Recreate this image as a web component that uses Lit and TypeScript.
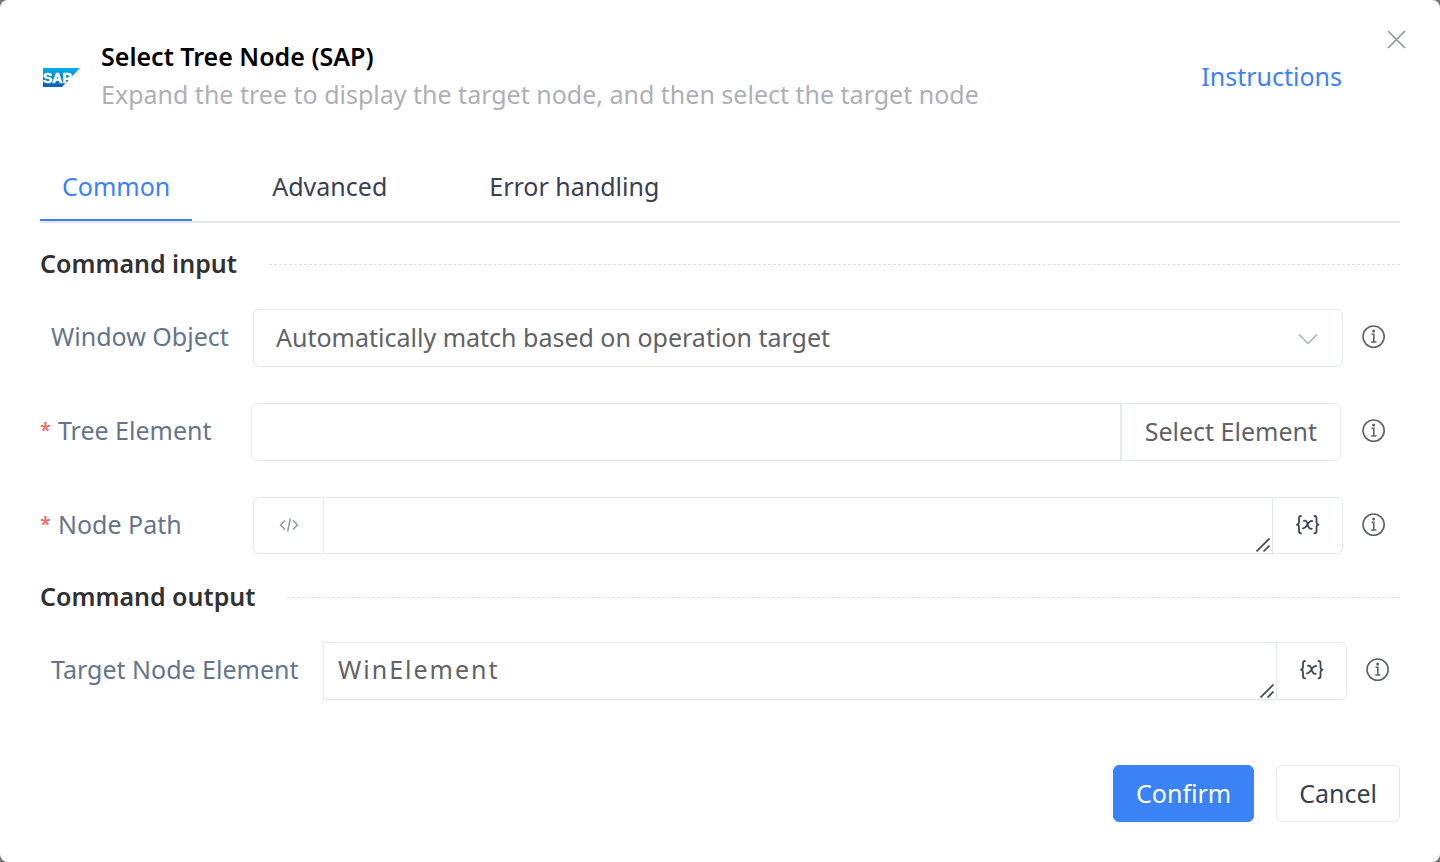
import { LitElement, html, css } from "lit";
import { customElement, property, state } from "lit/decorators.js";
import { classMap } from "lit/directives/class-map.js";

const variableIcon = html`
  <svg class="variable-icon" viewBox="0 0 24 22" aria-hidden="true">
    <g fill="none" stroke="#3d4757" stroke-width="1.8" stroke-linecap="round" stroke-linejoin="round">
      <path d="M5 2C3.500 2 3 2.800 3 4.300v3.700c0 1.500-.6 2.400-2 2.700 1.400.3 2 1.200 2 2.700v3.700C3 18.600 3.500 19.400 5 19.400" />
      <path d="M18.500 2c1.500 0 2 .8 2 2.300v3.700c0 1.500.6 2.400 2 2.700-1.400.3-2 1.200-2 2.700v3.700c0 1.500-.5 2.300-2 2.300" />
      <path d="M7.800 6.800c2.300-.6 3 .6 3.800 3.700s1.700 4.800 4.200 4.200M16.400 7c-2.200-.8-3.300 1-4.900 3.400S9 15 6.900 14.300" />
    </g>
  </svg>
`;

const gripIcon = html`
  <svg class="grip" viewBox="0 0 14 14" aria-hidden="true">
    <path d="M.5 13.500 13.500.5M7.500 13.500l6-6" fill="none" stroke="#4a4a4a" stroke-width="1.700" />
  </svg>
`;

@customElement("info-tip")
class InfoTip extends LitElement {
  @property() label = "";

  static styles = css`
    :host {
      display: block;
      flex: none;
      padding-bottom: 2px;
    }
    button {
      display: block;
      width: 24px;
      height: 24px;
      padding: 0;
      border: 0;
      background: none;
      cursor: pointer;
    }
    svg {
      display: block;
      width: 24px;
      height: 24px;
    }
  `;

  render() {
    return html`
      <button type="button" aria-label=${this.label}>
        <svg viewBox="0 0 24 24" fill="none" stroke="#606266">
          <circle cx="11.600" cy="11.600" r="10.600" stroke-width="1.600" />
          <path d="M9.600 9.300h2.200v7.700M9.200 17h5.200" stroke-width="1.600" />
          <circle cx="11.600" cy="6" r="1.500" fill="#606266" stroke="none" />
        </svg>
      </button>
    `;
  }
}

@customElement("app-root")
class AppRoot extends LitElement {
  @state() private tab = "Common";

  static styles = css`
    :host {
      display: block;
      background: #777;
      font-family: "Noto Sans", sans-serif;
      font-size: 25px;
      line-height: 38px;
      color: #374151;
    }
    * {
      box-sizing: border-box;
    }
    button,
    select,
    input,
    textarea {
      margin: 0;
      font: inherit;
      color: inherit;
    }
    button {
      cursor: pointer;
    }
    .dialog {
      position: relative;
      display: flex;
      flex-direction: column;
      min-height: 100vh;
      padding: 37px 40px 40px;
      border-radius: 8px;
      background: #fff;
    }
    .close {
      position: absolute;
      top: 27px;
      right: 32px;
      width: 24px;
      height: 24px;
      padding: 0;
      border: 0;
      background: none;
    }
    .close svg {
      display: block;
    }
    .header {
      display: flex;
      align-items: center;
      gap: 20px;
      padding-right: 58px;
    }
    .logo {
      flex: none;
      width: 41px;
      height: 24px;
    }
    .titles {
      flex: 1;
    }
    h1,
    h2,
    p {
      margin: 0;
      font-size: 25px;
    }
    h1 {
      font-weight: 600;
      color: #000;
    }
    p {
      color: #afafb7;
    }
    .link {
      padding-top: 2px;
      color: #3b82f6;
      text-decoration: none;
    }
    .tabs {
      display: flex;
      gap: 58px;
      margin-top: 40px;
      border-bottom: 2px solid #e4e7ed;
    }
    .tab {
      height: 68px;
      padding: 0 22px;
      border: 0;
      border-bottom: 2px solid transparent;
      background: none;
    }
    .tab.active {
      border-bottom-color: #3b82f6;
      color: #3b82f6;
    }
    .section {
      margin-top: 22px;
    }
    .section + .section {
      margin-top: 24px;
    }
    .section-head {
      display: flex;
      align-items: center;
      gap: 32px;
      height: 38px;
      margin-bottom: 26px;
    }
    h2 {
      padding-bottom: 2px;
      font-weight: 600;
      color: #303133;
    }
    .rule {
      flex: 1;
      border-top: 1px dashed #dcdfe6;
    }
    .rows {
      display: flex;
      flex-direction: column;
      gap: 36px;
    }
    .row {
      display: flex;
      align-items: center;
      padding-right: 14px;
    }
    .row.output {
      padding-right: 10px;
    }
    .label {
      flex: none;
      width: 213px;
      padding: 0 0 4px 11px;
      color: #64748b;
    }
    .label.required {
      display: flex;
      gap: 7px;
      padding-left: 0;
    }
    .star {
      font-size: 20px;
      font-weight: 600;
      color: #f56c6c;
    }
    .output .label {
      width: 283px;
    }
    .field {
      position: relative;
      display: flex;
      flex: 1;
      height: 58px;
      margin-right: 19px;
      border: 1px solid #e4e7ed;
      border-radius: 6px;
      color: #606266;
    }
    .multiline .field {
      height: 57px;
    }
    .picker .label {
      width: 211px;
    }
    .picker .field {
      margin-right: 21px;
    }
    .output .field {
      border-radius: 0 6px 6px 0;
    }
    .select,
    .input,
    .area {
      flex: 1;
      min-width: 0;
      width: 100%;
      height: 100%;
      border: 0;
      border-radius: inherit;
      outline: 0;
      background: transparent;
    }
    .select {
      appearance: none;
      padding: 0 60px 2px 22px;
    }
    .input {
      padding: 0 22px;
    }
    .chevron {
      position: absolute;
      top: 23px;
      right: 24px;
      width: 20px;
      height: 12px;
      pointer-events: none;
    }
    .pick {
      padding: 0 23px 2px;
      border: 0;
      border-left: 2px solid #e4e7ed;
      background: none;
    }
    .area-wrap {
      position: relative;
      display: flex;
      flex: 1;
    }
    .area {
      display: block;
      resize: none;
      overflow: hidden;
      padding: 7px 14px;
      letter-spacing: 2px;
    }
    .grip {
      position: absolute;
      right: 2px;
      bottom: 1px;
      width: 14px;
      height: 14px;
      pointer-events: none;
    }
    .addon {
      display: flex;
      flex: none;
      align-items: center;
      justify-content: center;
      width: 70px;
      padding: 0 0 2px;
      border: 0 solid #e4e7ed;
      background: none;
    }
    .addon.before {
      border-right-width: 1px;
    }
    .addon.after {
      border-left-width: 1px;
    }
    .variable-icon {
      width: 24px;
      height: 22px;
    }
    .code-icon {
      width: 20px;
      height: 16px;
    }
    .footer {
      display: flex;
      justify-content: flex-end;
      gap: 22px;
      margin-top: auto;
      padding-top: 40px;
    }
    .button {
      height: 57px;
      padding: 0 22px 2px;
      border: 1px solid #e4e7ed;
      border-radius: 6px;
      background: #fff;
    }
    .button.primary {
      border-color: #3b82f6;
      background: #3b82f6;
      color: #fff;
    }
  `;

  render() {
    return html`
      <main class="dialog">
        <button class="close" type="button" aria-label="Close">
          <svg width="24" height="24" viewBox="0 0 24 24">
            <path d="M4 4l17 17M21 4l-17 17" fill="none" stroke="#909399" stroke-width="1.600" />
          </svg>
        </button>
        <header class="header">
          <svg class="logo" viewBox="0 0 41 24" role="img" aria-label="SAP">
            <defs>
              <linearGradient id="sap" x1="0" y1="0" x2="0" y2="1">
                <stop offset="0" stop-color="#00aeef" />
                <stop offset="1" stop-color="#0a5fb4" />
              </linearGradient>
            </defs>
            <path d="M3 5h37L22 24H3z" fill="url(#sap)" />
            <text x="3" y="20" font-family="Liberation Sans, sans-serif" font-size="14" font-weight="700" fill="#fff" stroke="#fff" stroke-width=".6">SAP</text>
          </svg>
          <div class="titles">
            <h1>Select Tree Node (SAP)</h1>
            <p>Expand the tree to display the target node, and then select the target node</p>
          </div>
          <a class="link" href="#instructions">Instructions</a>
        </header>

        <nav class="tabs" role="tablist">
          ${["Common", "Advanced", "Error handling"].map(
            (name) => html`
              <button
                type="button"
                role="tab"
                aria-selected=${this.tab === name}
                class=${classMap({ tab: true, active: this.tab === name })}
                @click=${() => (this.tab = name)}
              >${name}</button>
            `
          )}
        </nav>

        <section class="section">
          <div class="section-head">
            <h2>Command input</h2>
            <div class="rule"></div>
          </div>
          <div class="rows">
            <div class="row">
              <label class="label" for="window">Window Object</label>
              <div class="field">
                <select class="select" id="window">
                  <option>Automatically match based on operation target</option>
                </select>
                <svg class="chevron" viewBox="0 0 20 12" aria-hidden="true">
                  <path d="M1 1.500l9 9 9-9" fill="none" stroke="#a8abb2" stroke-width="1.300" />
                </svg>
              </div>
              <info-tip label="About Window Object"></info-tip>
            </div>
            <div class="row picker">
              <label class="label required" for="tree"><span class="star">*</span>Tree Element</label>
              <div class="field">
                <input class="input" id="tree" type="text" />
                <button class="pick" type="button">Select Element</button>
              </div>
              <info-tip label="About Tree Element"></info-tip>
            </div>
            <div class="row multiline">
              <label class="label required" for="path"><span class="star">*</span>Node Path</label>
              <div class="field">
                <button class="addon before" type="button" aria-label="Edit as expression">
                  <svg class="code-icon" viewBox="0 0 20 16" aria-hidden="true">
                    <path d="M6 3.500 1.500 8 6 12.500M14 3.500 18.500 8 14 12.500M11.300 1.500 8.700 14.500" fill="none" stroke="#8f97a6" stroke-width="1.500" />
                  </svg>
                </button>
                <div class="area-wrap">
                  <textarea class="area" id="path" rows="1"></textarea>
                  ${gripIcon}
                </div>
                <button class="addon after" type="button" aria-label="Insert variable">${variableIcon}</button>
              </div>
              <info-tip label="About Node Path"></info-tip>
            </div>
          </div>
        </section>

        <section class="section">
          <div class="section-head">
            <h2>Command output</h2>
            <div class="rule"></div>
          </div>
          <div class="rows">
            <div class="row output">
              <label class="label" for="target">Target Node Element</label>
              <div class="field">
                <div class="area-wrap">
                  <textarea class="area" id="target" rows="1" .value=${"WinElement"}></textarea>
                  ${gripIcon}
                </div>
                <button class="addon after" type="button" aria-label="Insert variable">${variableIcon}</button>
              </div>
              <info-tip label="About Target Node Element"></info-tip>
            </div>
          </div>
        </section>

        <footer class="footer">
          <button class="button primary" type="button">Confirm</button>
          <button class="button" type="button">Cancel</button>
        </footer>
      </main>
    `;
  }
}
